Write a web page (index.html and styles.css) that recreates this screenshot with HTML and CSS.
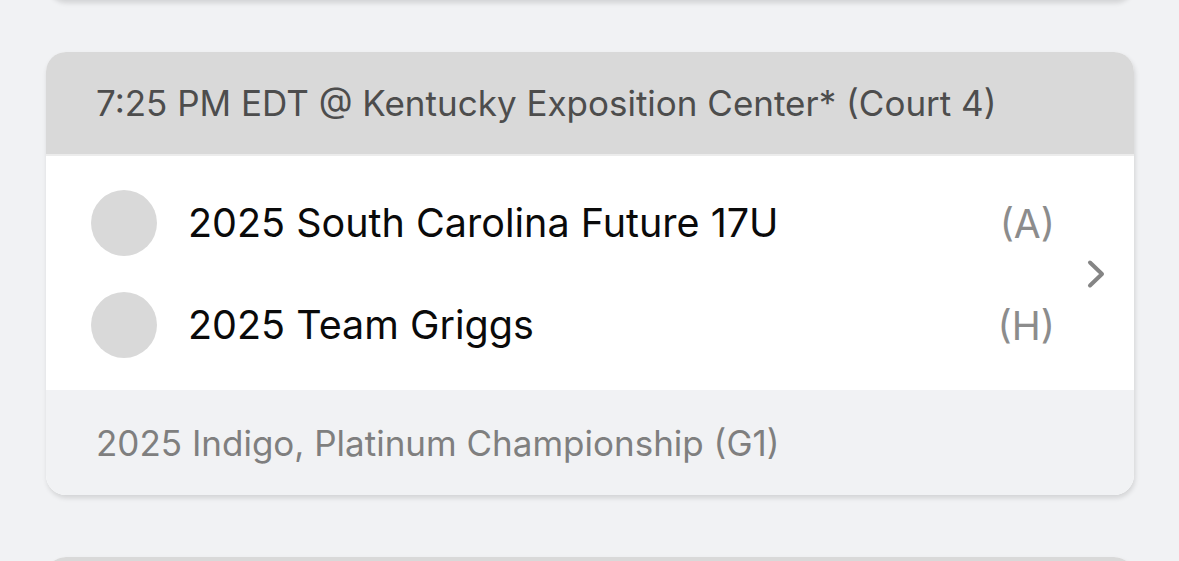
FILE: index.html
```html
<!DOCTYPE html>
<html lang="en">
<head>
<meta charset="utf-8">
<title>Schedule</title>
<link rel="stylesheet" href="styles.css">
</head>
<body>
<main class="list">
  <section class="card card-prev"></section>

  <section class="card">
    <header class="card-head">7:25 PM EDT @ Kentucky Exposition Center* (Court 4)</header>
    <div class="card-body">
      <div class="teams">
        <div class="team">
          <span class="avatar"></span>
          <span class="team-name">2025 South Carolina Future 17U</span>
          <span class="team-side">(A)</span>
        </div>
        <div class="team">
          <span class="avatar"></span>
          <span class="team-name">2025 Team Griggs</span>
          <span class="team-side">(H)</span>
        </div>
      </div>
      <svg class="chevron" width="20" height="30" viewBox="0 0 20 30" aria-hidden="true">
        <path d="M5 3.5 L17 15 L5 26.5" fill="none" stroke="#858585" stroke-width="4" stroke-linecap="round" stroke-linejoin="round"/>
      </svg>
    </div>
    <footer class="card-foot">2025 Indigo, Platinum Championship (G1)</footer>
  </section>

  <section class="card card-next">
    <header class="card-head"></header>
  </section>
</main>
</body>
</html>
```

FILE: styles.css
```css
* { box-sizing: border-box; }

html, body {
  margin: 0;
  padding: 0;
  background: #f1f2f4;
  font-family: Inter, "Noto Sans", sans-serif;
  overflow: hidden;
}

.list {
  display: flex;
  flex-direction: column;
  gap: 52px;
  padding: 0 45px 0 46px;
}

.card {
  width: 1088px;
  border-radius: 20px;
  overflow: hidden;
  background: #fff;
  box-shadow: 1px 3px 5px rgba(0, 0, 0, 0.13);
}

.card-prev {
  height: 40px;
  margin-top: -40px;
  background: #f1f2f4;
}

.card-next {
  margin-top: 10px;
  height: 120px;
}

.card-head {
  height: 104px;
  display: flex;
  align-items: center;
  padding: 0 0 0 50px;
  background: #d9d9d9;
  border-bottom: 2px solid #ececec;
  color: #4d4d4d;
  font-size: 35px;
}

.card-body {
  display: flex;
  align-items: center;
  padding: 16px 29px 14px 45px;
  background: #fff;
}

.teams {
  flex: 1;
  display: flex;
  flex-direction: column;
}

.team {
  height: 102px;
  display: flex;
  align-items: center;
}

.avatar {
  width: 66px;
  height: 66px;
  border-radius: 50%;
  background: #d9d9d9;
  flex: none;
}

.team-name {
  flex: 1;
  margin-left: 31px;
  color: #0a0a0a;
  font-size: 39.5px;
}

.team-side {
  color: #8c8c8c;
  font-size: 39px;
}

.chevron {
  flex: none;
  margin-left: 30px;
}

.card-foot {
  height: 105px;
  display: flex;
  align-items: center;
  padding-left: 50px;
  background: #f1f2f4;
  color: #7f7f7f;
  font-size: 35px;
}
```
